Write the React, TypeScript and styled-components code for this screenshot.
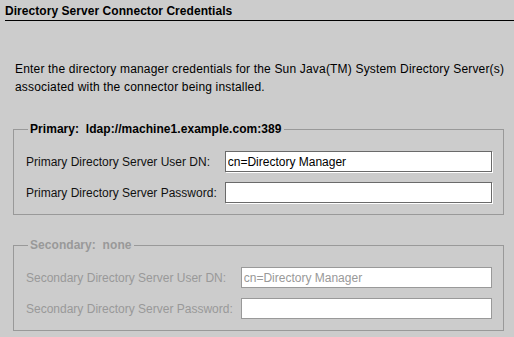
import React from 'react'
import styled, { createGlobalStyle } from 'styled-components'

const GlobalStyle = createGlobalStyle`
	html, body {
		margin: 0;
		padding: 0;
		background: #cccccc;
	}
	body {
		width: 514px;
		height: 337px;
		overflow: hidden;
		font-family: "Liberation Sans", Arial, sans-serif;
		font-size: 12px;
		color: #000;
	}
`

const Page = styled.div`
	width: 514px;
	height: 337px;
	background: #cccccc;
`

const Header = styled.div`
	margin-left: 5px;
	padding-top: 4px;
	height: 16px;
	border-bottom: 1px solid #000;
`

const Title = styled.h1`
	margin: 0;
	font-size: 12px;
	line-height: 14px;
	font-weight: bold;
	letter-spacing: 0.05px;
`

const Body = styled.div`
	padding: 0 10px 0 13px;
`

const Intro = styled.p`
	margin: 39px 0 0 2px;
	line-height: 18px;
	letter-spacing: 0.18px;
	white-space: nowrap;
`

const Group = styled.fieldset<{ $disabled?: boolean; $top: number }>`
	margin: ${p => p.$top}px 0 0 0;
	padding: 15px 11px 11px 11px;
	border: 1px solid #999999;
	min-width: 0;
	color: ${p => (p.$disabled ? '#999999' : '#000')};
`

const Legend = styled.legend`
	margin-left: 3px;
	padding: 0 2px;
	font-weight: bold;
	line-height: 14px;
	white-space: pre;
	letter-spacing: 0.05px;
`

const Form = styled.div`
	display: grid;
	grid-template-columns: auto 1fr;
	column-gap: 8px;
	row-gap: 10px;
	align-items: center;
`

const Label = styled.label<{ $disabled?: boolean }>`
	padding-left: 1px;
	color: ${p => (p.$disabled ? '#999999' : '#111')};
	white-space: nowrap;
`

const Field = styled.input`
	box-sizing: border-box;
	width: 100%;
	height: 21px;
	margin: 0;
	padding: 0 2px;
	border: 1px solid #6a6a6a;
	box-shadow: 1px 1px 0 #ffffff;
	background: #ffffff;
	font-family: "Liberation Sans", Arial, sans-serif;
	font-size: 12px;
	color: #000;
	outline: none;

	&:disabled {
		border-color: #999999;
		box-shadow: none;
		color: #999999;
		-webkit-text-fill-color: #999999;
		opacity: 1;
	}
`

interface IServer {
	kind: string
	host: string
	disabled?: boolean
	top: number
}

const servers: IServer[] = [
	{ kind: 'Primary', host: 'ldap://machine1.example.com:389', top: 26 },
	{ kind: 'Secondary', host: 'none', disabled: true, top: 23 },
]

function ServerGroup({ kind, host, disabled, top }: IServer) {
	return (
		<Group $disabled={disabled} $top={top} disabled={disabled}>
			<Legend>{`${kind}:  ${host}`}</Legend>
			<Form>
				<Label $disabled={disabled}>{kind} Directory Server User DN:</Label>
				<Field type="text" defaultValue="cn=Directory Manager" disabled={disabled} />
				<Label $disabled={disabled}>{kind} Directory Server Password:</Label>
				<Field type="password" disabled={disabled} />
			</Form>
		</Group>
	)
}

export default function App() {
	return (
		<Page>
			<GlobalStyle />
			<Header>
				<Title>Directory Server Connector Credentials</Title>
			</Header>
			<Body>
				<Intro>
					Enter the directory manager credentials for the Sun Java(TM) System Directory Server(s)
					<br />
					associated with the connector being installed.
				</Intro>
				{servers.map(s => (
					<ServerGroup key={s.kind} {...s} />
				))}
			</Body>
		</Page>
	)
}
